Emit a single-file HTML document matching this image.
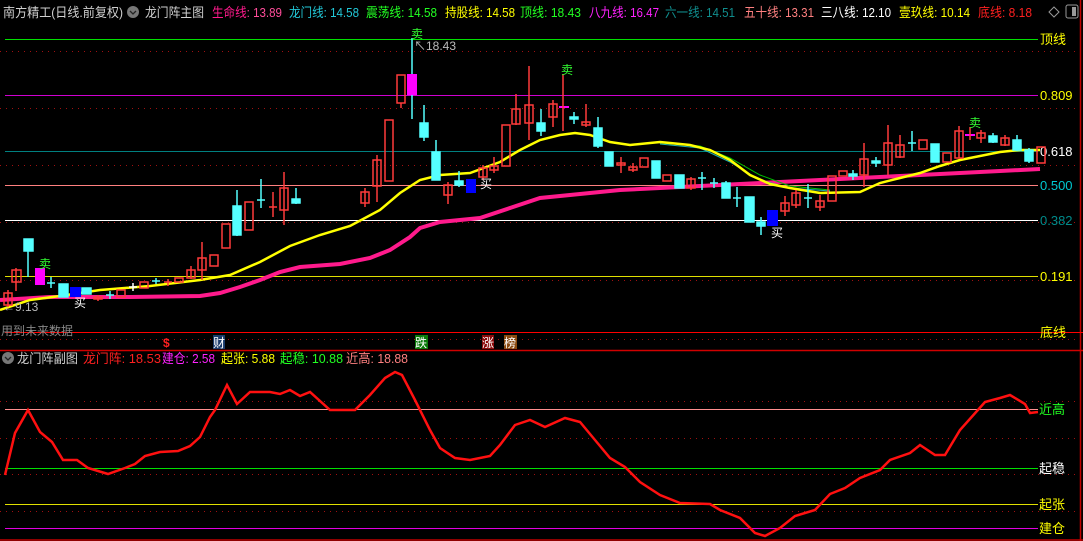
<!DOCTYPE html>
<html><head><meta charset="utf-8"><style>
html,body{margin:0;padding:0;background:#000;width:1083px;height:541px;overflow:hidden}
svg{display:block}
text{font-family:"Liberation Sans","Noto Sans CJK SC",sans-serif}
</style></head><body>
<svg width="1083" height="541" viewBox="0 0 1083 541" xmlns="http://www.w3.org/2000/svg">
<rect width="1083" height="541" fill="#000"/>
<line x1="1080.5" y1="0" x2="1080.5" y2="541" stroke="#c00000" stroke-width="1.5"/>
<line x1="0" y1="350.5" x2="1083" y2="350.5" stroke="#d00000" stroke-width="1.5"/>
<line x1="0" y1="540" x2="1083" y2="540" stroke="#c00000" stroke-width="1.5"/>
<g stroke="#a01010" stroke-dasharray="1,5" stroke-width="1">
<line x1="0" y1="51.5" x2="1078" y2="51.5"/><line x1="0" y1="108.5" x2="1078" y2="108.5"/>
<line x1="0" y1="165.5" x2="1078" y2="165.5"/><line x1="0" y1="222.5" x2="1078" y2="222.5"/>
<line x1="0" y1="280.5" x2="1078" y2="280.5"/><line x1="0" y1="339.5" x2="1078" y2="339.5"/>
<line x1="0" y1="401.5" x2="1078" y2="401.5"/><line x1="0" y1="438.5" x2="1078" y2="438.5"/>
<line x1="0" y1="474.5" x2="1078" y2="474.5"/><line x1="0" y1="511.5" x2="1078" y2="511.5"/>
</g>
<line x1="5" y1="39.5" x2="1038" y2="39.5" stroke="#00e000"/>
<line x1="5" y1="95.5" x2="1038" y2="95.5" stroke="#d000d0"/>
<line x1="5" y1="151.5" x2="1038" y2="151.5" stroke="#008080"/>
<line x1="5" y1="185.5" x2="1038" y2="185.5" stroke="#ff8080"/>
<line x1="5" y1="220.5" x2="1038" y2="220.5" stroke="#ffffff"/>
<line x1="5" y1="276.5" x2="1038" y2="276.5" stroke="#e0e000"/>
<line x1="5" y1="332.5" x2="1083" y2="332.5" stroke="#ff0000"/>
<g font-size="13">
<text x="1040" y="44" fill="#ffff00">顶线</text>
<text x="1040" y="100" fill="#ffff00">0.809</text>
<text x="1040" y="156" fill="#ffffff">0.618</text>
<text x="1040" y="190" fill="#00c8d0">0.500</text>
<text x="1040" y="225" fill="#008b8b">0.382</text>
<text x="1040" y="281" fill="#ffff00">0.191</text>
<text x="1040" y="337" fill="#ffff00">底线</text>
</g>
<polyline fill="none" stroke="#ff1a8c" stroke-width="4" points="0,300 50,297 130,297 200,296 220,293 240,287 260,280 280,272 300,267 340,264 370,258 390,250 410,237 420,228 440,222 480,218 510,208 540,198 580,194 620,190 660,188 700,186 740,184 780,182 820,180 860,178 900,176 940,174 980,172 1000,171 1040,169"/>
<polyline fill="none" stroke="#00c000" stroke-width="1" points="660,143 700,146 730,158 760,175 790,186 830,190"/>
<polyline fill="none" stroke="#20b0b0" stroke-width="1" points="660,144 700,148 730,162 760,180 790,188 830,191"/>
<polyline fill="none" stroke="#ffff00" stroke-width="2.5" points="0,310 30,300 60,296 100,290 150,286 200,280 230,275 260,262 290,246 320,235 350,226 380,210 400,193 420,180 440,175 470,173 500,162 520,150 540,140 560,135 575,133 590,135 610,142 630,145 660,142 690,145 710,150 730,160 750,175 770,184 790,188 820,193 860,192 880,183 900,178 920,173 940,166 960,160 980,156 1000,152 1020,150 1040,150"/>
<g stroke-width="1.5">
<g stroke="#ff3b3b" fill="none">
<line x1="8" y1="290" x2="8" y2="307"/><rect x="4" y="293" width="8" height="12"/>
<line x1="16" y1="268" x2="16" y2="291"/><rect x="12" y="270" width="9" height="12"/>
<line x1="98" y1="295" x2="98" y2="301"/><rect x="94" y="297" width="8" height="2"/>
<rect x="117" y="290" width="8" height="7"/>
<rect x="140" y="282" width="8" height="6"/>
<line x1="168" y1="279" x2="168" y2="286"/><line x1="164" y1="282" x2="172" y2="282"/>
<rect x="175" y="278" width="8" height="4"/>
<line x1="191" y1="266" x2="191" y2="279"/><rect x="187" y="270" width="8" height="8"/>
<line x1="202" y1="242" x2="202" y2="280"/><rect x="198" y="258" width="8" height="12"/>
<rect x="210" y="255" width="8" height="11"/>
<rect x="222" y="224" width="8" height="24"/>
<rect x="245" y="202" width="8" height="28"/>
<line x1="273" y1="192" x2="273" y2="217"/><line x1="269" y1="207" x2="277" y2="207"/>
<line x1="284" y1="172" x2="284" y2="225"/><rect x="280" y="188" width="8" height="22"/>
<line x1="365" y1="188" x2="365" y2="207"/><rect x="361" y="192" width="8" height="11"/>
<line x1="377" y1="155" x2="377" y2="202"/><rect x="373" y="160" width="8" height="26"/>
<rect x="385" y="120" width="8" height="61"/>
<line x1="401" y1="103" x2="401" y2="108"/><rect x="397" y="75" width="8" height="28"/>
<line x1="448" y1="182" x2="448" y2="204"/><rect x="444" y="185" width="8" height="10"/>
<line x1="483" y1="165" x2="483" y2="180"/><rect x="479" y="168" width="8" height="9"/>
<line x1="494" y1="157" x2="494" y2="173"/><rect x="490" y="166" width="8" height="4"/>
<rect x="502" y="125" width="8" height="41"/>
<line x1="516" y1="94" x2="516" y2="125"/><rect x="512" y="109" width="8" height="15"/>
<line x1="529" y1="66" x2="529" y2="140"/><rect x="525" y="105" width="8" height="18"/>
<line x1="553" y1="100" x2="553" y2="127"/><rect x="549" y="104" width="8" height="13"/>
<line x1="586" y1="104" x2="586" y2="127"/><rect x="582" y="122" width="8" height="3"/>
<line x1="621" y1="157" x2="621" y2="173"/><rect x="617" y="163" width="8" height="2"/>
<line x1="633" y1="163" x2="633" y2="172"/><rect x="629" y="167" width="8" height="3"/>
<rect x="640" y="158" width="8" height="9"/>
<rect x="663" y="175" width="8" height="6"/>
<line x1="691" y1="177" x2="691" y2="190"/><rect x="687" y="179" width="8" height="9"/>
<line x1="785" y1="196" x2="785" y2="216"/><rect x="781" y="203" width="8" height="8"/>
<line x1="796" y1="190" x2="796" y2="208"/><rect x="792" y="193" width="8" height="12"/>
<line x1="820" y1="195" x2="820" y2="211"/><rect x="816" y="201" width="8" height="6"/>
<rect x="828" y="176" width="8" height="25"/>
<rect x="839" y="171" width="8" height="5"/>
<line x1="864" y1="143" x2="864" y2="187"/><rect x="860" y="159" width="8" height="16"/>
<line x1="888" y1="125" x2="888" y2="175"/><rect x="884" y="143" width="8" height="22"/>
<line x1="900" y1="135" x2="900" y2="158"/><rect x="896" y="145" width="8" height="12"/>
<rect x="919" y="140" width="8" height="9"/>
<rect x="943" y="153" width="8" height="9"/>
<line x1="959" y1="126" x2="959" y2="158"/><rect x="955" y="131" width="8" height="27"/>
<line x1="981" y1="130" x2="981" y2="143"/><rect x="977" y="133" width="8" height="5"/>
<line x1="1005" y1="135" x2="1005" y2="146"/><rect x="1001" y="138" width="8" height="7"/>
<rect x="1037" y="147" width="8" height="16"/>
</g>
<g stroke="#55ffff" fill="#55ffff">
<line x1="28" y1="239" x2="28" y2="277"/><rect x="24" y="239" width="9" height="12"/>
<line x1="51" y1="277" x2="51" y2="288"/><line x1="47" y1="283" x2="55" y2="283"/>
<rect x="59" y="284" width="9" height="13"/>
<rect x="82" y="288" width="9" height="6"/>
<line x1="110" y1="291" x2="110" y2="299"/><line x1="106" y1="295" x2="114" y2="295"/>
<line x1="156" y1="278" x2="156" y2="284"/><line x1="152" y1="281" x2="160" y2="281"/>
<line x1="237" y1="190" x2="237" y2="236"/><rect x="233" y="206" width="8" height="29"/>
<line x1="261" y1="179" x2="261" y2="208"/><line x1="257" y1="200" x2="265" y2="200"/>
<line x1="296" y1="188" x2="296" y2="204"/><rect x="292" y="199" width="8" height="4"/>
<line x1="412" y1="38" x2="412" y2="119"/>
<line x1="424" y1="105" x2="424" y2="141"/><rect x="420" y="123" width="8" height="14"/>
<line x1="436" y1="140" x2="436" y2="180"/><rect x="432" y="152" width="8" height="28"/>
<line x1="459" y1="171" x2="459" y2="187"/><rect x="455" y="181" width="8" height="4"/>
<line x1="541" y1="109" x2="541" y2="136"/><rect x="537" y="123" width="8" height="8"/>
<line x1="574" y1="112" x2="574" y2="124"/><rect x="570" y="117" width="8" height="2"/>
<line x1="598" y1="117" x2="598" y2="148"/><rect x="594" y="128" width="8" height="18"/>
<rect x="605" y="152" width="8" height="14"/>
<rect x="652" y="161" width="8" height="17"/>
<rect x="675" y="175" width="9" height="13"/>
<line x1="702" y1="172" x2="702" y2="190"/><line x1="698" y1="178" x2="706" y2="178"/>
<line x1="714" y1="178" x2="714" y2="188"/><line x1="710" y1="183" x2="718" y2="183"/>
<line x1="726" y1="181" x2="726" y2="198"/><rect x="722" y="183" width="8" height="15"/>
<line x1="737" y1="187" x2="737" y2="207"/><line x1="733" y1="198" x2="741" y2="198"/>
<rect x="745" y="197" width="9" height="25"/>
<line x1="761" y1="217" x2="761" y2="235"/><rect x="757" y="222" width="8" height="4"/>
<line x1="808" y1="184" x2="808" y2="208"/><line x1="804" y1="198" x2="812" y2="198"/>
<line x1="853" y1="170" x2="853" y2="180"/><rect x="849" y="174" width="8" height="2"/>
<line x1="876" y1="157" x2="876" y2="167"/><rect x="872" y="161" width="8" height="2"/>
<line x1="912" y1="131" x2="912" y2="151"/><line x1="908" y1="143" x2="916" y2="143"/>
<rect x="931" y="144" width="8" height="18"/>
<line x1="993" y1="133" x2="993" y2="143"/><rect x="989" y="136" width="8" height="6"/>
<line x1="1017" y1="135" x2="1017" y2="151"/><rect x="1013" y="140" width="8" height="10"/>
<line x1="1029" y1="148" x2="1029" y2="163"/><rect x="1025" y="150" width="8" height="11"/>
</g>
<g stroke="#ffffff"><line x1="133" y1="283" x2="133" y2="291"/><line x1="129" y1="287" x2="137" y2="287"/></g>
<rect x="35" y="268" width="10" height="17" fill="#ff00ff"/>
<rect x="407" y="74" width="10" height="21" fill="#ff00ff"/>
<rect x="559" y="106" width="10" height="2" fill="#ff00ff"/><line x1="563" y1="74" x2="563" y2="131" stroke="#ff3b3b"/>
<rect x="965" y="134" width="10" height="2" fill="#ff00ff"/><line x1="970" y1="127" x2="970" y2="140" stroke="#ff3b3b"/>
<rect x="70" y="287" width="11" height="10" fill="#0000ff"/>
<rect x="466" y="179" width="10" height="14" fill="#0000ff"/>
<rect x="767" y="210" width="11" height="16" fill="#0000ff"/>
</g>
<g font-size="12">
<text x="39" y="268" fill="#33ff33">卖</text>
<text x="411" y="38" fill="#33ff33">卖</text>
<text x="561" y="74" fill="#33ff33">卖</text>
<text x="969" y="127" fill="#33ff33">卖</text>
<text x="74" y="307" fill="#ffffff">买</text>
<text x="480" y="188" fill="#ffffff">买</text>
<text x="771" y="237" fill="#ffffff">买</text>
<text x="3" y="311" fill="#bbbbbb">←9.13</text>
<text x="414" y="50" fill="#bbbbbb">↖18.43</text>
<text x="1" y="335" fill="#888888">用到未来数据</text>
</g>
<text x="163" y="347" font-size="12" fill="#ff2020" font-weight="bold">$</text>
<rect x="213" y="335" width="12" height="14" fill="#1a3a6a"/><text x="213" y="347" font-size="12" fill="#fff">财</text>
<rect x="415" y="335" width="13" height="14" fill="#0a7a0a"/><text x="415" y="347" font-size="12" fill="#fff">跌</text>
<rect x="482" y="335" width="12" height="14" fill="#8a0a0a"/><text x="482" y="347" font-size="12" fill="#fff">涨</text>
<rect x="504" y="335" width="13" height="14" fill="#8a4a10"/><text x="504" y="347" font-size="12" fill="#fff">榜</text>
<g font-size="13" lengthAdjust="spacingAndGlyphs">
<text x="3" y="17" fill="#d0d0d0" textLength="120" lengthAdjust="spacingAndGlyphs">南方精工(日线.前复权)</text>
<circle cx="133" cy="12" r="6" fill="#777"/><path d="M130,11 l3,3 l3,-3" stroke="#222" stroke-width="1.3" fill="none"/>
<text x="145" y="17" fill="#d0d0d0" textLength="59" lengthAdjust="spacingAndGlyphs">龙门阵主图</text>
<text x="212" y="17" fill="#ff1a8c" textLength="70" lengthAdjust="spacingAndGlyphs">生命线<tspan fill="#ff4d9a">: 13.89</tspan></text>
<text x="289" y="17" fill="#22c8d8" textLength="70" lengthAdjust="spacingAndGlyphs">龙门线: 14.58</text>
<text x="366" y="17" fill="#22ff22" textLength="71" lengthAdjust="spacingAndGlyphs">震荡线: 14.58</text>
<text x="445" y="17" fill="#ffff00" textLength="70" lengthAdjust="spacingAndGlyphs">持股线: 14.58</text>
<text x="520" y="17" fill="#22ff22" textLength="61" lengthAdjust="spacingAndGlyphs">顶线: 18.43</text>
<text x="589" y="17" fill="#ff22ff" textLength="70" lengthAdjust="spacingAndGlyphs">八九线: 16.47</text>
<text x="665" y="17" fill="#108e8e" textLength="70" lengthAdjust="spacingAndGlyphs">六一线: 14.51</text>
<text x="744" y="17" fill="#ff8080" textLength="70" lengthAdjust="spacingAndGlyphs">五十线: 13.31</text>
<text x="821" y="17" fill="#ffffff" textLength="70" lengthAdjust="spacingAndGlyphs">三八线: 12.10</text>
<text x="899" y="17" fill="#ffff00" textLength="71" lengthAdjust="spacingAndGlyphs">壹玖线: 10.14</text>
<text x="978" y="17" fill="#ff2020" textLength="54" lengthAdjust="spacingAndGlyphs">底线: 8.18</text>
<path d="M1054,7 l5,5 l-5,5 l-5,-5 z" stroke="#999" fill="none"/>
<rect x="1066" y="5" width="12" height="13" rx="2" stroke="#999" fill="none"/><rect x="1072" y="7" width="4" height="9" fill="#999"/>
</g>
<g font-size="13">
<circle cx="8" cy="358" r="6" fill="#777"/><path d="M5,357 l3,3 l3,-3" stroke="#222" stroke-width="1.3" fill="none"/>
<text x="17" y="363" fill="#d0d0d0" textLength="61" lengthAdjust="spacingAndGlyphs">龙门阵副图</text>
<text x="83" y="363" fill="#ff2020" textLength="78" lengthAdjust="spacingAndGlyphs">龙门阵: 18.53</text>
<text x="162" y="363" fill="#ff22ff" textLength="53" lengthAdjust="spacingAndGlyphs">建仓: 2.58</text>
<text x="221" y="363" fill="#ffff00" textLength="54" lengthAdjust="spacingAndGlyphs">起张: 5.88</text>
<text x="280" y="363" fill="#22ff22" textLength="63" lengthAdjust="spacingAndGlyphs">起稳: 10.88</text>
<text x="346" y="363" fill="#ff8080" textLength="62" lengthAdjust="spacingAndGlyphs">近高: 18.88</text>
</g>
<line x1="5" y1="409.5" x2="1038" y2="409.5" stroke="#ff9090"/>
<line x1="5" y1="468.5" x2="1038" y2="468.5" stroke="#00e000"/>
<line x1="5" y1="504.5" x2="1038" y2="504.5" stroke="#e0e000"/>
<line x1="5" y1="528.5" x2="1038" y2="528.5" stroke="#e000e0"/>
<g font-size="13">
<text x="1039" y="414" fill="#22ff22">近高</text>
<text x="1039" y="473" fill="#ffffff">起稳</text>
<text x="1039" y="509" fill="#ffff00">起张</text>
<text x="1039" y="533" fill="#ffff00">建仓</text>
</g>
<polyline fill="none" stroke="#ff1010" stroke-width="2.5" points="5,475 15,433 28,410 40,432 52,442 63,460 77,460 88,468 108,474 125,468 135,464 145,456 160,452 178,451 190,446 200,437 210,417 215,410 227,385 237,404 250,392 270,392 280,394 290,390 300,396 310,392 330,410 355,410 370,395 385,378 395,372 402,375 415,400 430,430 440,448 455,458 470,460 490,456 500,445 515,425 530,420 545,427 565,418 580,422 595,440 610,458 625,467 640,482 660,495 680,503 710,504 720,510 740,518 755,533 765,536 780,528 795,516 815,510 830,494 845,488 860,478 880,470 890,460 910,453 920,445 935,455 945,455 960,430 985,402 1000,398 1010,395 1025,404 1030,413 1038,412"/>
</svg>
</body></html>
